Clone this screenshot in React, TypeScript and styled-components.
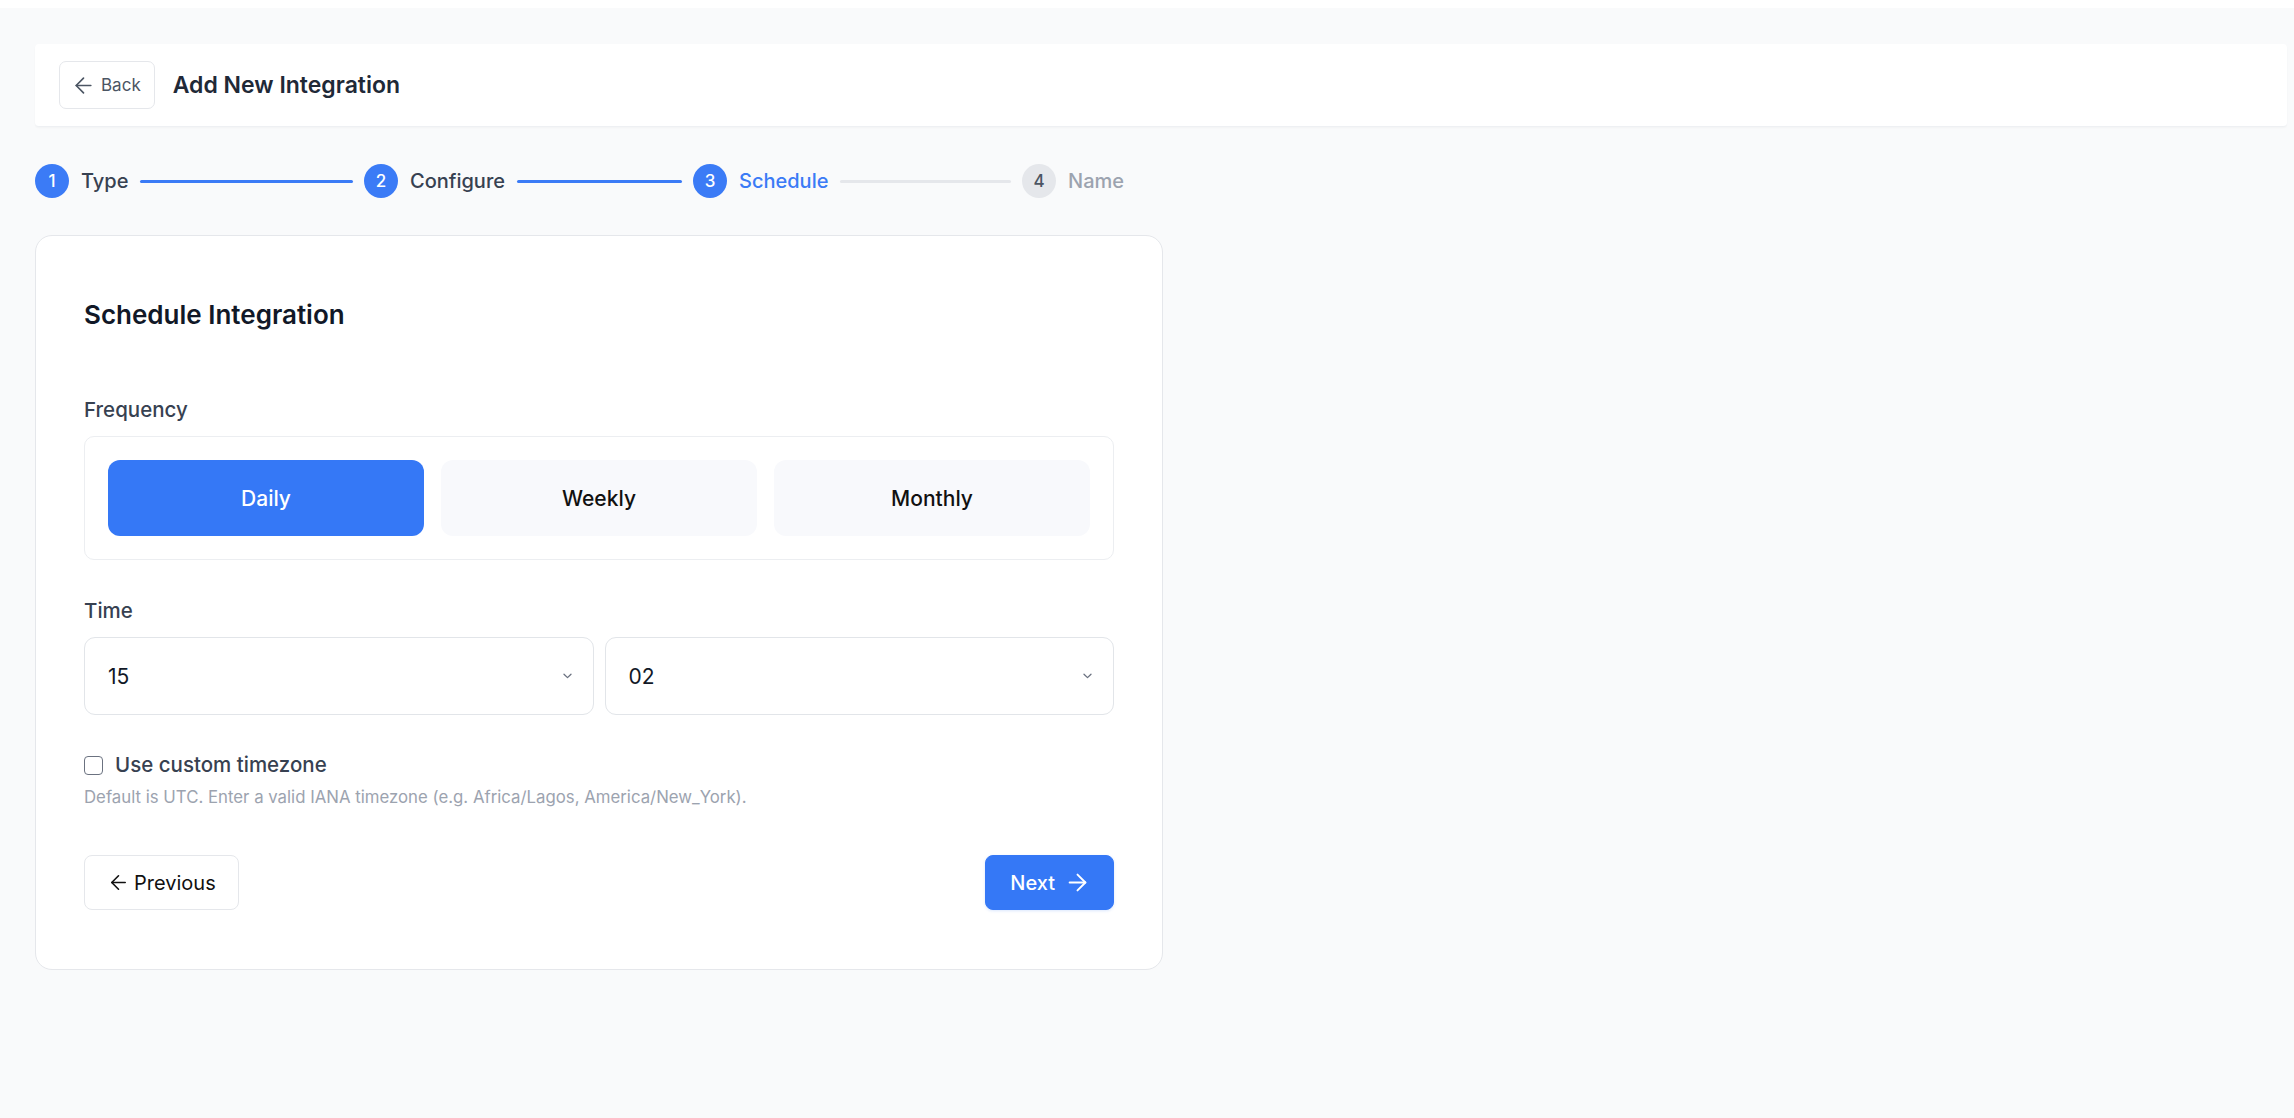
import React, { useState } from 'react';
import styled, { createGlobalStyle } from 'styled-components';
import { ArrowLeft, ArrowRight } from 'lucide-react';

const GlobalStyle = createGlobalStyle`
  * {
    box-sizing: border-box;
  }
  body, html {
    margin: 0;
    padding: 0;
    background-color: #f9fafb;
    font-family: Inter, 'Noto Sans', 'Liberation Sans', sans-serif;
    color: #111827;
  }
`;

const TopStrip = styled.div`
  height: 8px;
  background-color: #fff;
`;

const Page = styled.div`
  padding: 36px 7px 80px 35px;
`;

const Header = styled.header`
  display: flex;
  align-items: center;
  gap: 18px;
  height: 83px;
  padding: 0 24px;
  background-color: #fff;
  border-radius: 4px;
  border-bottom: 1px solid #eef0f3;
  box-shadow: 0 1px 2px rgba(15, 23, 42, 0.03);
`;

const BackButton = styled.button`
  display: flex;
  align-items: center;
  gap: 5px;
  height: 48px;
  padding: 0 13px 0 11px;
  background-color: #fff;
  border: 1px solid #e5e7eb;
  border-radius: 7px;
  font-family: inherit;
  font-size: 17px;
  color: #4b5563;
  cursor: pointer;
`;

const PageTitle = styled.h1`
  margin: 0;
  font-size: 23px;
  font-weight: 600;
  color: #1f2937;
`;

const Stepper = styled.div`
  display: flex;
  align-items: center;
  margin: 37px 0 37px;
  height: 34px;
`;

const Step = styled.div<{ $last?: boolean }>`
  display: flex;
  align-items: center;
  gap: 12px;
  width: ${({ $last }) => ($last ? 'auto' : '329px')};
  padding-right: ${({ $last }) => ($last ? '0' : '11px')};
`;

const Circle = styled.div<{ $state: 'done' | 'active' | 'todo' }>`
  display: flex;
  align-items: center;
  justify-content: center;
  flex-shrink: 0;
  width: 34px;
  height: 34px;
  border-radius: 50%;
  font-size: 17px;
  font-weight: 500;
  background-color: ${({ $state }) => ($state === 'todo' ? '#e5e7eb' : '#3b7bf6')};
  color: ${({ $state }) => ($state === 'todo' ? '#4b5563' : '#fff')};
`;

const StepLabel = styled.span<{ $state: 'done' | 'active' | 'todo' }>`
  font-size: 20px;
  font-weight: 500;
  white-space: nowrap;
  color: ${({ $state }) =>
    $state === 'active' ? '#3b7bf6' : $state === 'todo' ? '#9ca3af' : '#374151'};
`;

const StepLine = styled.div<{ $filled: boolean }>`
  flex: 1;
  height: 3px;
  border-radius: 2px;
  background-color: ${({ $filled }) => ($filled ? '#3b7bf6' : '#e5e7eb')};
`;

const Card = styled.section`
  width: 1128px;
  padding: 61px 48px 59px;
  background-color: #fff;
  border: 1px solid #e5e7eb;
  border-radius: 17px;
`;

const CardTitle = styled.h2`
  margin: 0 0 62px;
  font-size: 26px;
  line-height: 36px;
  font-weight: 600;
  color: #111827;
`;

const FieldLabel = styled.div`
  font-size: 20.5px;
  line-height: 30px;
  font-weight: 500;
  color: #374151;
  margin-bottom: 11px;
`;

const FrequencyBox = styled.div`
  display: grid;
  grid-template-columns: repeat(3, 1fr);
  gap: 17px;
  padding: 23px;
  border: 1px solid #eceef1;
  border-radius: 10px;
  margin-bottom: 36px;
`;

const FrequencyOption = styled.button<{ $selected: boolean }>`
  height: 76px;
  border: none;
  border-radius: 12px;
  font-family: inherit;
  font-size: 21px;
  font-weight: 500;
  cursor: pointer;
  background-color: ${({ $selected }) => ($selected ? '#3578f6' : '#f8f9fc')};
  color: ${({ $selected }) => ($selected ? '#fff' : '#111111')};
`;

const TimeRow = styled.div`
  display: grid;
  grid-template-columns: 1fr 1fr;
  gap: 11px;
  margin-bottom: 35px;
`;

const SelectBox = styled.label`
  display: flex;
  align-items: center;
  height: 78px;
  padding-right: 21px;
  border: 1px solid #e2e5e9;
  border-radius: 11px;
  background-color: #fff;
  color: #6b7280;
`;

const Select = styled.select`
  flex: 1;
  height: 100%;
  padding: 0 0 0 23px;
  border: none;
  outline: none;
  background: transparent;
  appearance: none;
  font-family: inherit;
  font-size: 21px;
  color: #111827;
`;

const CheckRow = styled.label`
  display: flex;
  align-items: center;
  gap: 12px;
  font-size: 20.5px;
  line-height: 30px;
  font-weight: 500;
  color: #374151;
  cursor: pointer;
`;

const CheckBox = styled.input`
  appearance: none;
  margin: 0;
  width: 19px;
  height: 19px;
  border: 1.5px solid #6b7280;
  border-radius: 4px;
  background-color: #fff;
  &:checked {
    background-color: #3b7bf6;
    border-color: #3b7bf6;
  }
`;

const Hint = styled.p`
  margin: 6px 0 47px;
  font-size: 16.8px;
  line-height: 22px;
  color: #9ca3af;
`;

const Actions = styled.div`
  display: flex;
  justify-content: space-between;
  align-items: center;
`;

const NavButton = styled.button<{ $primary?: boolean }>`
  display: flex;
  align-items: center;
  gap: ${({ $primary }) => ($primary ? '9px' : '4px')};
  height: 55px;
  padding: ${({ $primary }) => ($primary ? '0 22px 0 24px' : '0 22px 0 22px')};
  border: 1px solid ${({ $primary }) => ($primary ? '#3578f6' : '#e5e7eb')};
  border-radius: 8px;
  font-family: inherit;
  font-size: 20px;
  font-weight: ${({ $primary }) => ($primary ? 500 : 400)};
  background-color: ${({ $primary }) => ($primary ? '#3578f6' : '#fff')};
  color: ${({ $primary }) => ($primary ? '#fff' : '#111111')};
  box-shadow: ${({ $primary }) => ($primary ? '0 1px 3px rgba(53, 120, 246, 0.18)' : 'none')};
  cursor: pointer;
`;

const Chevron = () => (
  <svg width="9" height="6" viewBox="0 0 9 6" fill="none">
    <path d="M1 1.2 4.5 4.6 8 1.2" stroke="currentColor" strokeWidth="1.3" strokeLinecap="round" strokeLinejoin="round" />
  </svg>
);

const steps = ['Type', 'Configure', 'Schedule', 'Name'];
const currentStep = 2;
const frequencies = ['Daily', 'Weekly', 'Monthly'];
const hours = Array.from({ length: 24 }, (_, i) => String(i).padStart(2, '0'));
const minutes = Array.from({ length: 60 }, (_, i) => String(i).padStart(2, '0'));

const App: React.FC = () => {
  const [frequency, setFrequency] = useState('Daily');
  const [hour, setHour] = useState('15');
  const [minute, setMinute] = useState('02');
  const [customTz, setCustomTz] = useState(false);

  return (
    <>
      <GlobalStyle />
      <TopStrip />
      <Page>
        <Header>
          <BackButton>
            <ArrowLeft size={25} strokeWidth={1.6} />
            Back
          </BackButton>
          <PageTitle>Add New Integration</PageTitle>
        </Header>

        <Stepper>
          {steps.map((label, i) => {
            const state = i < currentStep ? 'done' : i === currentStep ? 'active' : 'todo';
            const last = i === steps.length - 1;
            return (
              <Step key={label} $last={last}>
                <Circle $state={state}>{i + 1}</Circle>
                <StepLabel $state={state}>{label}</StepLabel>
                {!last && <StepLine $filled={i < currentStep} />}
              </Step>
            );
          })}
        </Stepper>

        <Card>
          <CardTitle>Schedule Integration</CardTitle>

          <FieldLabel>Frequency</FieldLabel>
          <FrequencyBox>
            {frequencies.map((f) => (
              <FrequencyOption key={f} $selected={frequency === f} onClick={() => setFrequency(f)}>
                {f}
              </FrequencyOption>
            ))}
          </FrequencyBox>

          <FieldLabel>Time</FieldLabel>
          <TimeRow>
            <SelectBox>
              <Select value={hour} onChange={(e) => setHour(e.target.value)}>
                {hours.map((h) => (
                  <option key={h} value={h}>{h}</option>
                ))}
              </Select>
              <Chevron />
            </SelectBox>
            <SelectBox>
              <Select value={minute} onChange={(e) => setMinute(e.target.value)}>
                {minutes.map((m) => (
                  <option key={m} value={m}>{m}</option>
                ))}
              </Select>
              <Chevron />
            </SelectBox>
          </TimeRow>

          <CheckRow>
            <CheckBox type="checkbox" checked={customTz} onChange={(e) => setCustomTz(e.target.checked)} />
            Use custom timezone
          </CheckRow>
          <Hint>Default is UTC. Enter a valid IANA timezone (e.g. Africa/Lagos, America/New_York).</Hint>

          <Actions>
            <NavButton>
              <ArrowLeft size={23} strokeWidth={1.7} />
              Previous
            </NavButton>
            <NavButton $primary>
              Next
              <ArrowRight size={27} strokeWidth={1.7} />
            </NavButton>
          </Actions>
        </Card>
      </Page>
    </>
  );
};

export default App;
